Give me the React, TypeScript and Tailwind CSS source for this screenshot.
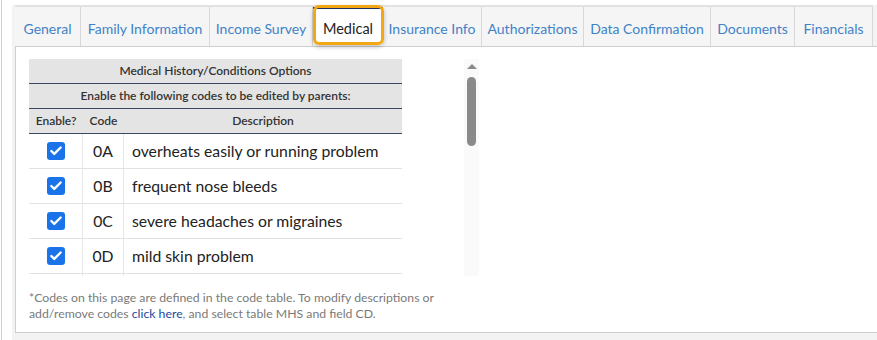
import { Check } from 'lucide-react'

const tabs = [
  { label: 'General', w: 'w-[66px]' },
  { label: 'Family Information', w: 'w-[129px]' },
  { label: 'Income Survey', w: 'w-[103px]' },
  { label: 'Medical', w: 'w-[70px]', active: true },
  { label: 'Insurance Info', w: 'w-[99px]' },
  { label: 'Authorizations', w: 'w-[102px]' },
  { label: 'Data Confirmation', w: 'w-[127px]' },
  { label: 'Documents', w: 'w-[84px]' },
  { label: 'Financials', w: 'w-[78px]' },
]

const codes = [
  { code: '0A', desc: 'overheats easily or running problem' },
  { code: '0B', desc: 'frequent nose bleeds' },
  { code: '0C', desc: 'severe headaches or migraines' },
  { code: '0D', desc: 'mild skin problem' },
]

function TabBar() {
  return (
    <div className="flex border-b border-[#cfcfcf]">
      <div className="flex border-t-2 border-[#e2e2e2] bg-[#f5f5f5]">
        {tabs.map((t) =>
          t.active ? (
            <div key={t.label} className={`relative flex h-[39px] items-center justify-center bg-white border-t-[2px] border-[#1d3566] text-[#222] ${t.w}`}>
              <span className="pt-[2px] text-[14.5px]">{t.label}</span>
              {/* focus ring */}
              <div className="absolute left-0 right-[-1px] top-[-4px] bottom-[1px] rounded-[6px] border-[3px] border-[#f3a712] shadow-[0_2px_4px_rgba(0,0,0,0.25)]" />
            </div>
          ) : (
            <div key={t.label} className={`flex h-[39px] items-center justify-center border-r border-[#d8d8d8] text-[#3f82c8] ${t.w}`}>
              <span className="pt-[3px]">{t.label}</span>
            </div>
          ),
        )}
      </div>
    </div>
  )
}

function CheckBox() {
  return (
    <div className="flex h-[18px] w-[18px] items-center justify-center rounded-[3px] bg-[#1a73e8]">
      <Check className="h-[14px] w-[14px] text-white" strokeWidth={4} />
    </div>
  )
}

function CodesTable() {
  return (
    <div className="w-[373px] text-[#333]">
      <div className="flex h-[25px] items-center justify-center border-b border-[#3b4864] bg-[#e4e4e4] text-[12px] font-semibold">
        Medical History/Conditions Options
      </div>
      <div className="flex h-[25px] items-center justify-center border-b border-[#3b4864] bg-[#e4e4e4] text-[12px] font-semibold">
        Enable the following codes to be edited by parents:
      </div>
      <div className="flex h-[25px] items-center border-b border-[#3b4864] bg-[#e4e4e4] text-[12px] font-semibold">
        <div className="w-[54px] text-center">Enable?</div>
        <div className="w-[41px] text-center">Code</div>
        <div className="flex-1 text-center">Description</div>
      </div>
      {codes.map((c) => (
        <div key={c.code} className="flex h-[35px] border-b border-[#e2e2e2] text-[15.75px] text-[#222]">
          <div className="flex w-[54px] items-center justify-center border-r border-[#e6e6e6]">
            <CheckBox />
          </div>
          <div className="flex w-[41px] items-center justify-center border-r border-[#e6e6e6]">{c.code}</div>
          <div className="flex flex-1 items-center pl-[8px]">{c.desc}</div>
        </div>
      ))}
      {/* next row, scrolled out of view */}
      <div className="flex h-[35px]">
        <div className="w-[54px] border-r border-[#e6e6e6]" />
        <div className="w-[41px] border-r border-[#e6e6e6]" />
      </div>
    </div>
  )
}

function FakeScrollbar() {
  return (
    <div className="flex w-[15px] flex-col items-center bg-[#fafafa] pt-[5px]">
      <div className="h-0 w-0 border-x-[5px] border-b-[5px] border-x-transparent border-b-[#8a8a8a]" />
      <div className="mt-[8px] h-[69px] w-[9px] rounded-full bg-[#8a8a8a]" />
    </div>
  )
}

export default function App() {
  return (
    <div className="flex h-[340px] w-[877px] overflow-hidden bg-white font-['Lato',sans-serif] text-[14px]">
      <div className="ml-[1px] w-[1px] bg-[#cfcfcf]" />
      <div className="ml-[10px] mt-[5px] flex flex-1 flex-col bg-[#f3f3f3] pl-[3px]">
        <TabBar />
        <div className="flex h-[286px] flex-col border-b border-l border-[#cfcfcf] bg-white px-[13px] pt-[12px]">
          <div className="flex h-[217px] w-[450px] overflow-hidden">
            <div className="w-[435px] overflow-hidden">
              <CodesTable />
            </div>
            <FakeScrollbar />
          </div>
          <p className="mt-[14px] text-[12.25px] leading-[16px] text-[#7a7a7a]">
            *Codes on this page are defined in the code table. To modify descriptions or
            <br />
            add/remove codes <span className="text-[#1c4a9c]">click here</span>, and select table MHS and field CD.
          </p>
        </div>
      </div>
    </div>
  )
}
